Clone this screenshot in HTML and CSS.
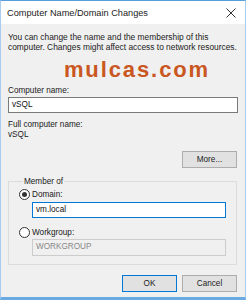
FILE: index.html
```
<!DOCTYPE html>
<html lang="en">

<head>
  <meta charset="UTF-8">
  <meta name="viewport" content="width=device-width, initial-scale=1.0">
  <title>Computer Name/Domain Changes</title>
  <link rel="stylesheet" href="styles.css">
</head>

<body>
  <div class="window">
    <header class="titlebar">
      <span class="title">Computer Name/Domain Changes</span>
      <svg class="close" width="10" height="10" viewBox="0 0 10 10">
        <path d="M0.5 0.5 L9.5 9.5 M9.5 0.5 L0.5 9.5" stroke="#333" stroke-width="1" fill="none" />
      </svg>
    </header>
    <main class="content">
      <p class="intro">You can change the name and the membership of this<br>computer. Changes might affect access to network resources.</p>
      <div class="brand">mulcas.com</div>
      <label class="label">Computer name:</label>
      <div class="field">vSQL</div>
      <p class="label full">Full computer name:</p>
      <p class="label">vSQL</p>
      <div class="more_row">
        <button class="btn">More...</button>
      </div>
      <fieldset class="group">
        <legend>Member of</legend>
        <div class="radio_row">
          <span class="radio checked"></span>
          <span>Domain:</span>
        </div>
        <div class="field sub focus">vm.local</div>
        <div class="radio_row">
          <span class="radio"></span>
          <span>Workgroup:</span>
        </div>
        <div class="field sub disabled">WORKGROUP</div>
      </fieldset>
      <div class="actions">
        <button class="btn default">OK</button>
        <button class="btn">Cancel</button>
      </div>
    </main>
  </div>
</body>

</html>
```

FILE: styles.css
```
* {
  margin: 0;
  padding: 0;
  box-sizing: border-box;
}

body {
  width: 246px;
  height: 300px;
  overflow: hidden;
  font-family: "Liberation Sans", Arial, sans-serif;
  font-size: 8.2px;
  color: #1a1a1a;
}

.window {
  display: flex;
  flex-direction: column;
  width: 246px;
  height: 300px;
  border-top: 1px solid #5a9fdc;
  border-left: 1px solid #a9cdee;
  border-right: 1px solid #a9cdee;
  border-bottom: 3px solid #6aaae2;
  background-color: #f0f0f0;
}

.titlebar {
  display: flex;
  align-items: center;
  justify-content: space-between;
  height: 23px;
  padding: 0 9px 0 6px;
  background-color: #fff;
}

.title {
  font-size: 9.2px;
  color: #222;
}

.content {
  flex: 1;
  padding: 8px 7px 0 7px;
}

.intro {
  font-size: 8.4px;
  line-height: 10px;
  white-space: nowrap;
  color: #222;
}

.brand {
  margin-top: 7px;
  text-align: center;
  padding-left: 28px;
  font-size: 22px;
  font-weight: bold;
  line-height: 22px;
  letter-spacing: 1.9px;
  color: #c9571f;
}

.label {
  display: block;
  line-height: 9px;
}

.brand+.label {
  margin-top: 5px;
}

.field {
  height: 16px;
  margin-top: 2px;
  padding-left: 3px;
  line-height: 14px;
  border: 1px solid #7a7a7a;
  background-color: #fff;
  color: #111;
}

.full {
  margin-top: 7px;
}

.full+.label {
  margin-top: 1px;
}

.more_row {
  display: flex;
  justify-content: flex-end;
  margin-top: 12px;
  padding-right: 1px;
}

.btn {
  width: 55px;
  height: 17px;
  font-family: inherit;
  font-size: 8.2px;
  color: #222;
  background-color: #e1e1e1;
  border: 1px solid #adadad;
}

.btn.default {
  border-color: #0078d7;
}

.group {
  margin-top: 9px;
  margin-right: 1px;
  padding: 2px 10px 8px 10px;
  border: 1px solid #dcdcdc;
}

.group legend {
  margin-left: 4px;
  padding: 0 1px;
  line-height: 9px;
}

.radio_row {
  display: flex;
  align-items: center;
  gap: 2px;
  height: 12px;
}

.radio {
  display: flex;
  align-items: center;
  justify-content: center;
  width: 11px;
  height: 11px;
  border: 1px solid #333;
  border-radius: 50%;
  background-color: #fff;
}

.radio.checked::after {
  content: "";
  width: 5px;
  height: 5px;
  border-radius: 50%;
  background-color: #333;
}

.field.sub {
  margin: 2px 0 8px 13px;
}

.field.focus {
  border-color: #0078d7;
}

.field.disabled {
  height: 17px;
  margin-top: 1px;
  margin-bottom: 0;
  border-color: #ccc;
  background-color: #f0f0f0;
  color: #888;
}

.actions {
  display: flex;
  justify-content: flex-end;
  gap: 5px;
  margin-top: 10px;
  padding-right: 1px;
}
```
